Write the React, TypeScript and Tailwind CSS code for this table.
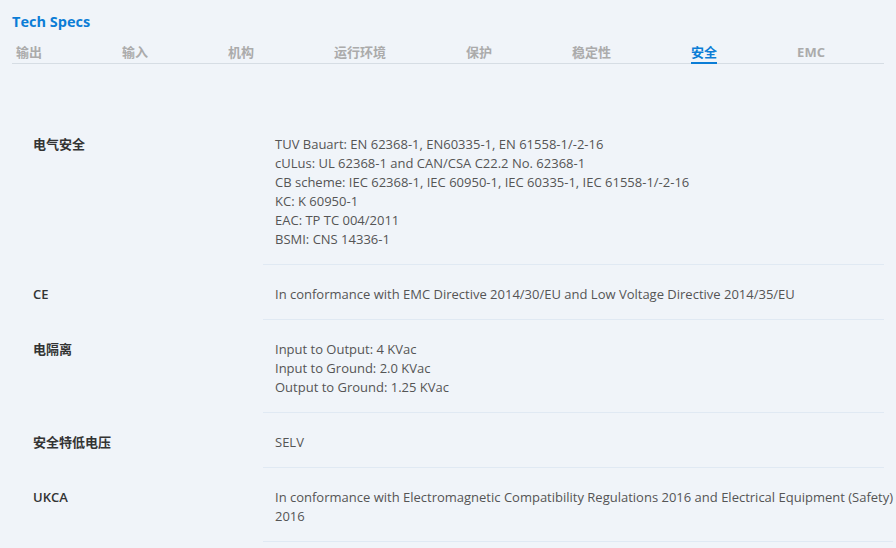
const tabs = ["输出", "输入", "机构", "运行环境", "保护", "稳定性", "安全", "EMC"];

const specs: { label: string; lines: string[] }[] = [
  {
    label: "电气安全",
    lines: [
      "TUV Bauart: EN 62368-1, EN60335-1, EN 61558-1/-2-16",
      "cULus: UL 62368-1 and CAN/CSA C22.2 No. 62368-1",
      "CB scheme: IEC 62368-1, IEC 60950-1, IEC 60335-1, IEC 61558-1/-2-16",
      "KC: K 60950-1",
      "EAC: TP TC 004/2011",
      "BSMI: CNS 14336-1",
    ],
  },
  {
    label: "CE",
    lines: ["In conformance with EMC Directive 2014/30/EU and Low Voltage Directive 2014/35/EU"],
  },
  {
    label: "电隔离",
    lines: ["Input to Output: 4 KVac", "Input to Ground: 2.0 KVac", "Output to Ground: 1.25 KVac"],
  },
  { label: "安全特低电压", lines: ["SELV"] },
  {
    label: "UKCA",
    lines: [
      "In conformance with Electromagnetic Compatibility Regulations 2016 and Electrical Equipment (Safety)",
      "2016",
    ],
  },
];

export default function App() {
  return (
    <div
      className="w-[896px] h-[548px] overflow-hidden bg-[#f0f4f9] px-3 pt-[12px]"
      style={{ fontFamily: '"Open Sans", "Noto Sans CJK SC", sans-serif' }}
    >
      <h2 className="text-[14.5px] leading-[20px] font-bold text-[#0b7dd6]">Tech Specs</h2>

      <div className="mt-[10px] flex gap-[80px] border-b border-[#d6dde4] pl-[4px] whitespace-nowrap">
        {tabs.map((t) => (
          <div
            key={t}
            className={
              t === "安全"
                ? "text-[13px] leading-[20px] font-bold text-[#0b7dd6] border-b-2 border-[#0b7dd6] -mb-px"
                : "text-[13px] leading-[20px] font-bold text-[#ababab]"
            }
          >
            {t}
          </div>
        ))}
      </div>

      <div className="mt-[51px]">
        {specs.map((s) => (
          <div key={s.label} className="flex">
            <div className="w-[251px] shrink-0 pl-[21px] pt-[20px] text-[13px] leading-[19px] font-semibold text-[#333]">
              {s.label}
            </div>
            <div className="flex-1 border-b border-[#e0e9f3] pl-3 pt-[20px] pb-[15px] text-[13px] leading-[19px] text-[#555] whitespace-nowrap">
              {s.lines.map((l) => (
                <div key={l}>{l}</div>
              ))}
            </div>
          </div>
        ))}
      </div>
    </div>
  );
}
